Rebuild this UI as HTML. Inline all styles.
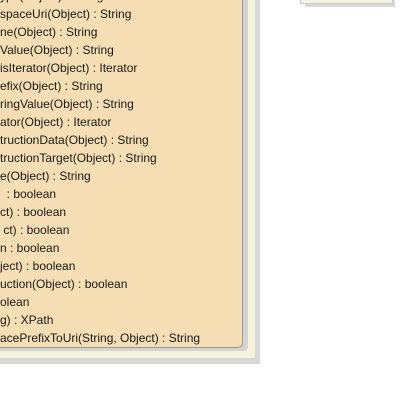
<!DOCTYPE html>
<html><head><style>
html,body{margin:0;padding:0;width:417px;height:402px;background:#fff;overflow:hidden;position:relative}
.o{position:absolute;left:0;top:-10px;width:260px;height:374px;background:#d8d8d8}
.c{position:absolute;left:0;top:-10px;width:255px;height:368px;background:#f5f3dc}
.s{position:absolute;left:0;top:-10px;width:248px;height:361px;background:#d4d4d4;border-radius:0 0 5px 0}
.p{position:absolute;left:-5px;top:-10px;width:246px;height:356px;background:#f5deb3;border:1px solid #999;border-radius:0 0 5px 0}
.t{position:absolute;left:0;top:-13px;font:12px "Liberation Sans",sans-serif;line-height:18px;color:#1a1a1a;white-space:pre}
.b{position:absolute;left:300px;top:-10px;width:91px;height:12px;background:#f5f3dc;border:1px solid #c8c8d8}
.bs{position:absolute;left:305px;top:-10px;width:90px;height:17px;background:#d8d8d8}
</style></head><body>
<div class="o"></div><div class="c"></div><div class="s"></div><div class="p"></div>
<div class="bs"></div><div class="b"></div>
<div class="t">ype(Object) : String
spaceUri(Object) : String
ne(Object) : String
Value(Object) : String
isIterator(Object) : Iterator
efix(Object) : String
ringValue(Object) : String
ator(Object) : Iterator
tructionData(Object) : String
tructionTarget(Object) : String
e(Object) : String
  : boolean
ct) : boolean
 ct) : boolean
n : boolean
ject) : boolean
uction(Object) : boolean
olean
g) : XPath
acePrefixToUri(String, Object) : String</div>
</body></html>
